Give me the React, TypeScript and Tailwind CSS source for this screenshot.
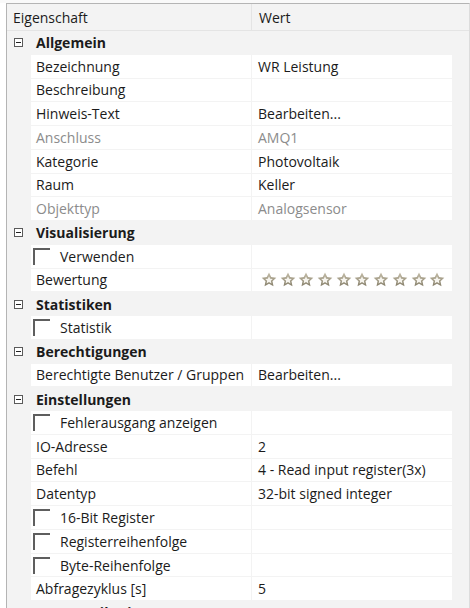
import React from "react";

type Row =
  | { kind: "group"; label: string }
  | { kind: "prop"; label: string; value?: string; disabled?: boolean; check?: boolean; stars?: boolean };

const rows: Row[] = [
  { kind: "group", label: "Allgemein" },
  { kind: "prop", label: "Bezeichnung", value: "WR Leistung" },
  { kind: "prop", label: "Beschreibung" },
  { kind: "prop", label: "Hinweis-Text", value: "Bearbeiten..." },
  { kind: "prop", label: "Anschluss", value: "AMQ1", disabled: true },
  { kind: "prop", label: "Kategorie", value: "Photovoltaik" },
  { kind: "prop", label: "Raum", value: "Keller" },
  { kind: "prop", label: "Objekttyp", value: "Analogsensor", disabled: true },
  { kind: "group", label: "Visualisierung" },
  { kind: "prop", label: "Verwenden", check: true },
  { kind: "prop", label: "Bewertung", stars: true },
  { kind: "group", label: "Statistiken" },
  { kind: "prop", label: "Statistik", check: true },
  { kind: "group", label: "Berechtigungen" },
  { kind: "prop", label: "Berechtigte Benutzer / Gruppen", value: "Bearbeiten..." },
  { kind: "group", label: "Einstellungen" },
  { kind: "prop", label: "Fehlerausgang anzeigen", check: true },
  { kind: "prop", label: "IO-Adresse", value: "2" },
  { kind: "prop", label: "Befehl", value: "4 - Read input register(3x)" },
  { kind: "prop", label: "Datentyp", value: "32-bit signed integer" },
  { kind: "prop", label: "16-Bit Register", check: true },
  { kind: "prop", label: "Registerreihenfolge", check: true },
  { kind: "prop", label: "Byte-Reihenfolge", check: true },
  { kind: "prop", label: "Abfragezyklus [s]", value: "5" },
  { kind: "group", label: "Kommunikation" },
];

function MinusBox() {
  return (
    <svg width="9" height="9" viewBox="0 0 9 9" className="shrink-0">
      <rect x="0.5" y="0.5" width="8" height="8" fill="#fff" stroke="#5a5a5a" />
      <path d="M2 4.5h5" stroke="#222" />
    </svg>
  );
}

function Star() {
  return (
    <svg width="16" height="15" viewBox="0 0 16 15" className="shrink-0">
      <defs>
        <linearGradient id="sg" x1="0" y1="0" x2="0" y2="1">
          <stop offset="0" stopColor="#c4bda8" />
          <stop offset="1" stopColor="#867f6a" />
        </linearGradient>
      </defs>
      <path
        d="M8 0.5l2.2 4.6 5.1 0.6-3.8 3.5 1 5.1L8 11.8l-4.5 2.5 1-5.1L0.7 5.7l5.1-0.6z"
        fill="url(#sg)"
      />
      <path d="M8 4.3l1.2 2.4 2.6 0.3-1.9 1.8 0.5 2.6L8 10.1l-2.4 1.3 0.5-2.6-1.9-1.8 2.6-0.3z" fill="#f6f4ee" />
    </svg>
  );
}

function Check() {
  return <span className="w-[17px] h-[17px] shrink-0 border-t-2 border-l-2 border-[#5e5e5e] mt-[1px]" />;
}

export default function App() {
  return (
    <div
      className="w-[470px] h-[608px] overflow-hidden bg-white text-[14px] text-[#1b1b1b]"
      style={{ fontFamily: '"Open Sans", "Noto Sans", sans-serif' }}
    >
      <div className="h-[3px] bg-[#f9f9f9]" />
      <div className="h-[605px] border-t border-[#9a9a9a] ml-[6px] border-l border-[#b4b4b4] border-r-[1px] border-r-[#dcdcdc] bg-[#f3f3f3] flex flex-col">
        {/* Header */}
        <div className="flex h-[27px] shrink-0 border-b border-[#e4e4e4]">
          <div className="w-[245px] border-r border-[#e4e4e4] flex items-center pl-[6px] pt-px">Eigenschaft</div>
          <div className="flex items-center pl-[7px] pt-px">Wert</div>
        </div>

        {rows.map((r, i) =>
          r.kind === "group" ? (
            <div key={i} className="flex items-center h-[23.75px] shrink-0 pl-[7px] gap-[13px]">
              <MinusBox />
              <span className="font-bold">{r.label}</span>
            </div>
          ) : (
            <div key={i} className="flex h-[23.75px] shrink-0 pb-px pl-[24px]">
              <div
                className={`w-[220px] bg-white flex items-center overflow-hidden whitespace-nowrap ${
                  r.check ? "pl-[2px] items-start pt-[2px]" : "pl-[5px]"
                } ${r.disabled ? "text-[#8c8c8c]" : ""}`}
              >
                {r.check && <Check />}
                <span className={r.check ? "ml-[10px] -mt-[1px]" : ""}>{r.label}</span>
              </div>
              <div
                className={`w-[200px] ml-px bg-white flex items-center whitespace-nowrap overflow-hidden pl-[6px] ${
                  r.disabled ? "text-[#8c8c8c]" : ""
                }`}
              >
                {r.stars ? (
                  <div className="flex gap-[2.7px] pl-[3px]">
                    {Array.from({ length: 10 }).map((_, k) => (
                      <Star key={k} />
                    ))}
                  </div>
                ) : (
                  r.value
                )}
              </div>
            </div>
          )
        )}
      </div>
    </div>
  );
}
